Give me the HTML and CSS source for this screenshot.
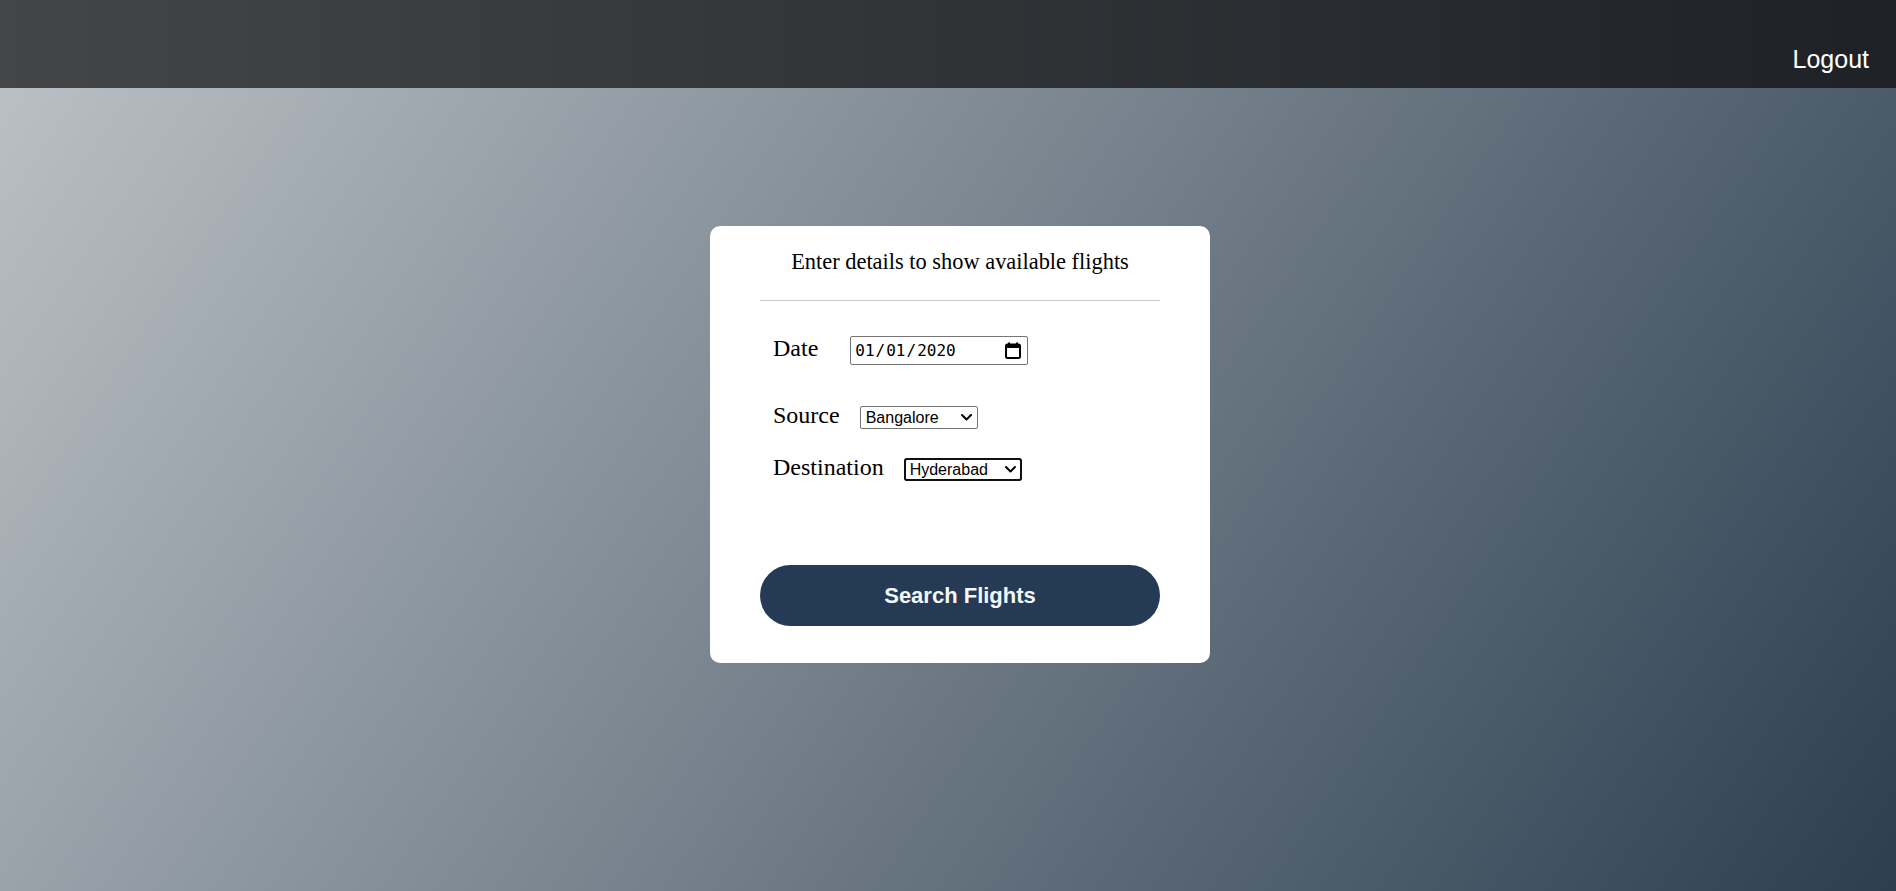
FILE: index.html
```html
<!DOCTYPE html>
<html lang="en">
<head>
<meta charset="utf-8">
<title>Search Flights</title>
<link rel="stylesheet" href="styles.css">
</head>
<body>
<header class="topbar">
  <a class="logout" href="#">Logout</a>
</header>
<main class="page">
  <section class="card">
    <h2 class="card-title">Enter details to show available flights</h2>
    <hr class="divider">
    <form class="flight-form">
      <div class="field field-date">
        <label class="field-label" for="date">Date</label>
        <input class="date-input" type="date" id="date" value="2020-01-01">
      </div>
      <div class="field field-source">
        <label class="field-label" for="source">Source</label>
        <select class="city-select" id="source">
          <option>Bangalore</option>
          <option>Hyderabad</option>
          <option>Chennai</option>
        </select>
      </div>
      <div class="field field-dest">
        <label class="field-label" for="dest">Destination</label>
        <select class="city-select is-focused" id="dest">
          <option>Hyderabad</option>
          <option>Bangalore</option>
          <option>Chennai</option>
        </select>
      </div>
      <button class="search-btn" type="button">Search Flights</button>
    </form>
  </section>
</main>
</body>
</html>
```

FILE: styles.css
```css
html {
  min-height: 100%;
  background: linear-gradient(124deg, #bdc3c7 0%, #2c3e50 100%);
}

body {
  margin: 0;
  min-height: 100vh;
  font-family: "Liberation Serif", "Times New Roman", serif;
  color: #000;
}

.topbar {
  height: 88px;
  box-sizing: border-box;
  display: flex;
  justify-content: flex-end;
  align-items: flex-start;
  padding: 45px 27px 0 0;
  background: linear-gradient(to right, #434547, #1e2126);
}

.logout {
  font-family: "Liberation Sans", Arial, sans-serif;
  font-size: 25px;
  line-height: 29px;
  color: #fff;
  text-decoration: none;
}

.page {
  display: flex;
  justify-content: center;
  padding-left: 24px;
  padding-top: 138px;
}

.card {
  width: 500px;
  box-sizing: border-box;
  background: #fff;
  border-radius: 10px;
  padding: 23px 50px 37px;
}

.card-title {
  margin: 0;
  font-size: 22.4px;
  font-weight: normal;
  text-align: center;
  line-height: 26px;
}

.divider {
  margin: 25px 0 0;
  border: 0;
  height: 1px;
  background: #cccccc;
}

.flight-form {
  display: flex;
  flex-direction: column;
  padding-top: 34px;
}

.field {
  display: flex;
  align-items: baseline;
  padding-left: 13px;
}

.field-source {
  margin-top: 37px;
}

.field-dest {
  margin-top: 24px;
}

.field-label {
  font-size: 24px;
  line-height: 27.6px;
  margin-right: 20px;
}

.date-input {
  margin-left: 12px;
  width: 178px;
  height: 29px;
  box-sizing: border-box;
  font-family: "DejaVu Sans Mono", "Liberation Mono", monospace;
  font-size: 16px;
  padding: 2px 3px;
  border: 1px solid #767676;
  border-radius: 2px;
  color: #000;
  background: #fff;
}

.date-input::-webkit-calendar-picker-indicator {
  width: 16px;
  height: 17px;
  padding: 0;
  margin: 0 3px 0 0;
  background: url("data:image/svg+xml,%3Csvg xmlns='http://www.w3.org/2000/svg' viewBox='0 0 16 17'%3E%3Cpath d='M4 0.5v2M12 0.5v2' stroke='%23000' stroke-width='2' fill='none'/%3E%3Crect x='1' y='2.5' width='14' height='13.5' rx='1.5' fill='none' stroke='%23000' stroke-width='2'/%3E%3Crect x='1' y='2.5' width='14' height='3.5' fill='%23000'/%3E%3C/svg%3E") center / 16px 17px no-repeat;
  opacity: 1;
}

.city-select {
  -webkit-appearance: none;
  appearance: none;
  width: 118px;
  height: 23px;
  box-sizing: border-box;
  font-family: "Liberation Sans", Arial, sans-serif;
  font-size: 16px;
  line-height: 19px;
  padding: 0 20px 0 5px;
  border: 1px solid #767676;
  border-radius: 2px;
  color: #000;
  background: #fff url("data:image/svg+xml,%3Csvg xmlns='http://www.w3.org/2000/svg' viewBox='0 0 11 7'%3E%3Cpath d='M1 1l4.5 4.5L10 1' stroke='%23000' stroke-width='2' fill='none' stroke-linecap='round' stroke-linejoin='round'/%3E%3C/svg%3E") right 5px center / 11px 7px no-repeat;
}

.is-focused {
  outline: 2px solid #101010;
  outline-offset: -2px;
  border-radius: 3px;
}

.search-btn {
  margin-top: 84px;
  width: 100%;
  height: 61px;
  border: 0;
  border-radius: 31px;
  background: #253b55;
  color: #f4f7fa;
  font-family: "Liberation Sans", Arial, sans-serif;
  font-size: 22px;
  font-weight: bold;
  cursor: pointer;
}
```
